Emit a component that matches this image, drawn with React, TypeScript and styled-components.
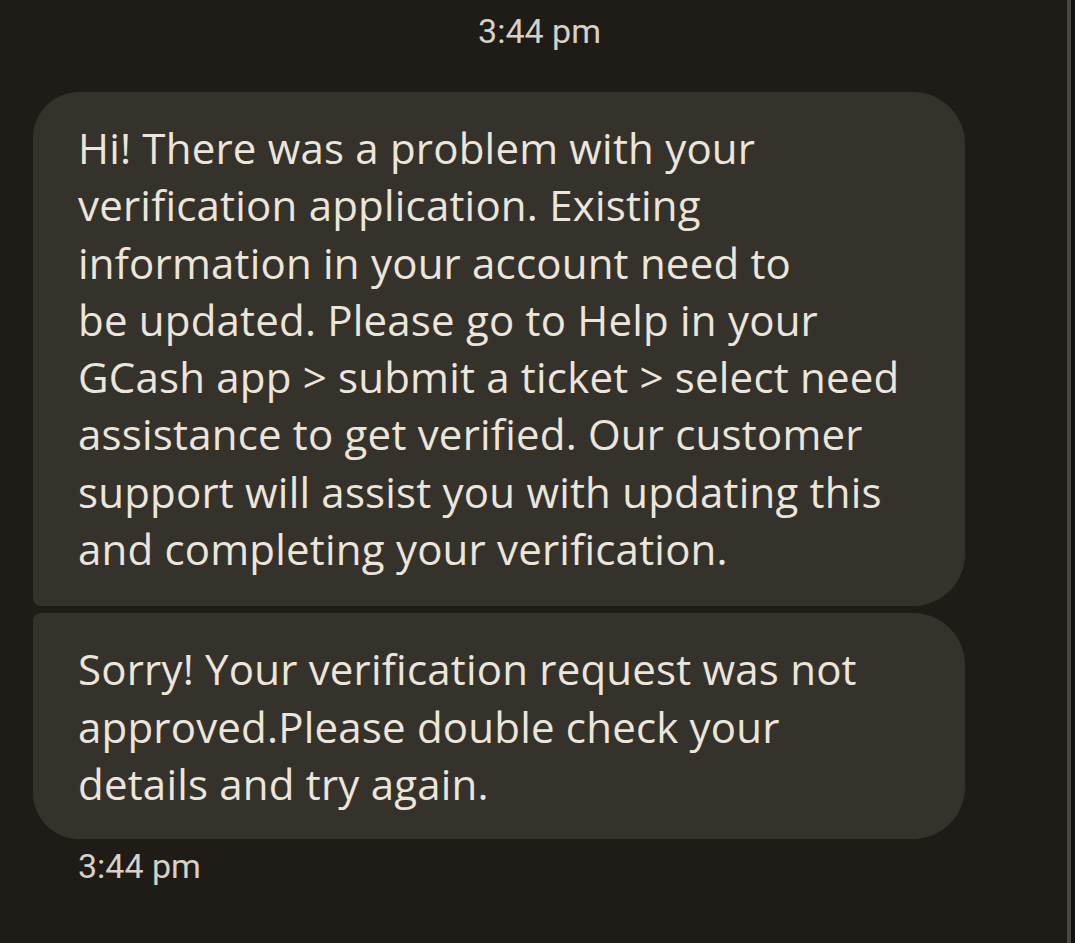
import React from 'react';
import styled, { createGlobalStyle } from 'styled-components';

const GlobalStyle = createGlobalStyle`
  html, body {
    margin: 0;
    padding: 0;
    background: #1f1c17;
  }
`;

const messages: { id: number; lines: string[]; shape: 'first' | 'last' }[] = [
  {
    id: 1,
    shape: 'first',
    lines: [
      'Hi! There was a problem with your',
      'verification application. Existing',
      'information in your account need to',
      'be updated. Please go to Help in your',
      'GCash app > submit a ticket > select need',
      'assistance to get verified. Our customer',
      'support will assist you with updating this',
      'and completing your verification.',
    ],
  },
  {
    id: 2,
    shape: 'last',
    lines: [
      'Sorry! Your verification request was not',
      'approved.Please double check your',
      'details and try again.',
    ],
  },
];

const App: React.FC = () => {
  return (
    <>
      <GlobalStyle />
      <Screen>
        <Thread>
          <Timestamp $align="center">3:44 pm</Timestamp>
          <Group>
            {messages.map((m) => (
              <Bubble key={m.id} $shape={m.shape}>
                {m.lines.map((l, i) => (
                  <Line key={i}>{l}</Line>
                ))}
              </Bubble>
            ))}
          </Group>
          <Timestamp $align="left">3:44 pm</Timestamp>
        </Thread>
        <Scrollbar />
      </Screen>
    </>
  );
};

const Screen = styled.div`
  display: flex;
  width: 1075px;
  height: 943px;
  background: #1f1c17;
  overflow: hidden;
`;

const Thread = styled.div`
  flex: 1;
  display: flex;
  flex-direction: column;
  padding: 11px 0 0 33px;
`;

const Scrollbar = styled.div`
  width: 4px;
  margin-right: 4px;
  background: #4a4641;
  box-shadow: 4px 0 0 #141210;
`;

const Timestamp = styled.div<{ $align: 'center' | 'left' }>`
  font-family: Roboto, 'Liberation Sans', sans-serif;
  font-size: 34px;
  line-height: 40px;
  color: #d6d0c6;
  text-align: ${(p) => p.$align};
  width: ${(p) => (p.$align === 'center' ? '1013px' : 'auto')};
  padding-left: ${(p) => (p.$align === 'left' ? '45px' : '0')};
  margin-top: ${(p) => (p.$align === 'left' ? '7px' : '0')};
`;

const Group = styled.div`
  display: flex;
  flex-direction: column;
  gap: 7px;
  margin-top: 41px;
  width: 932px;
`;

const Bubble = styled.div<{ $shape: 'first' | 'last' }>`
  background: #35322b;
  color: #ebe5dc;
  font-family: 'Open Sans', 'Noto Sans', sans-serif;
  font-size: 42px;
  line-height: 57.3px;
  letter-spacing: 0.2px;
  padding: ${(p) => (p.$shape === 'first' ? '27px 45px 29px' : '27px 45px 27px')};
  border-radius: ${(p) => (p.$shape === 'first' ? '46px 52px 52px 8px' : '8px 52px 52px 46px')};
`;

const Line = styled.div`
  white-space: nowrap;
`;

export default App;
